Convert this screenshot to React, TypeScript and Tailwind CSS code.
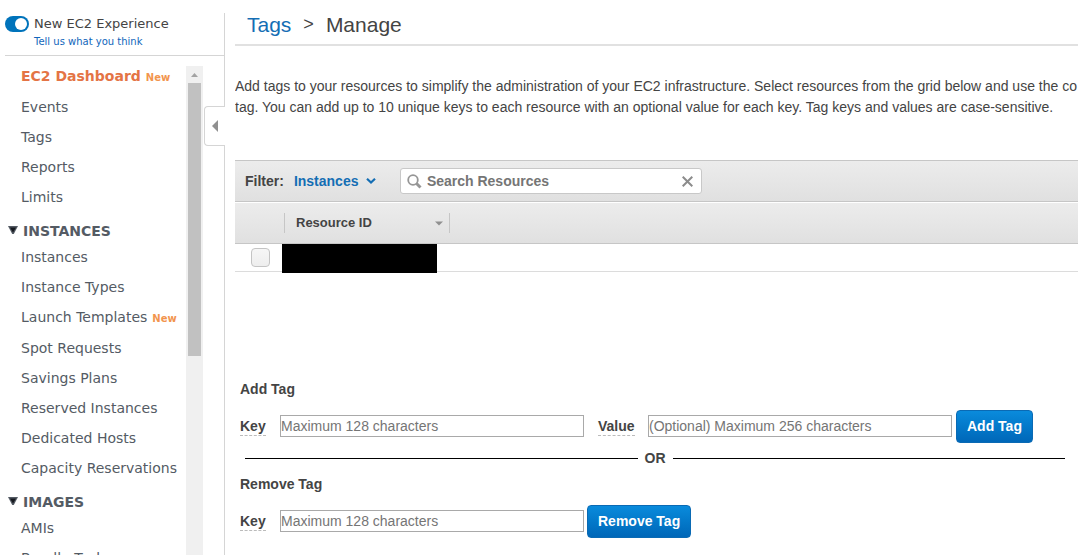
import React from "react";

type NavItem = { label: string; isNew?: boolean };
type NavGroup = { title: string; items: NavItem[] };

const topItems: NavItem[] = [
  { label: "Events" },
  { label: "Tags" },
  { label: "Reports" },
  { label: "Limits" },
];

const groups: NavGroup[] = [
  {
    title: "INSTANCES",
    items: [
      { label: "Instances" },
      { label: "Instance Types" },
      { label: "Launch Templates", isNew: true },
      { label: "Spot Requests" },
      { label: "Savings Plans" },
      { label: "Reserved Instances" },
      { label: "Dedicated Hosts" },
      { label: "Capacity Reservations" },
    ],
  },
  { title: "IMAGES", items: [{ label: "AMIs" }, { label: "Bundle Tasks" }] },
];

function NewBadge() {
  return <span className="ml-[5px] text-[10px] font-bold text-[#f2954e]">New</span>;
}

function NavLink({ label, isNew }: NavItem) {
  return (
    <li className={isNew ? "h-[31px] leading-[30px]" : "h-[30px] leading-[30px]"}>
      <a href="#" className="pl-[21px] text-[14px] text-[#545b64]">
        {label}
      </a>
      {isNew && <NewBadge />}
    </li>
  );
}

function Sidebar() {
  return (
    <aside className="relative mt-[13px] flex w-[225px] shrink-0 flex-col border-r border-[#d5d5d5] font-['DejaVu_Sans',sans-serif]">
      <div className="ml-[5px] flex h-[43px] gap-[5px] border-b border-[#d5d5d5] pt-[2px]">
        <label className="relative mt-px flex h-4 w-6 shrink-0 items-center justify-end rounded-full bg-[#0073bb] pr-[2px]">
          <input
            type="checkbox"
            defaultChecked
            aria-label="New EC2 Experience"
            className="absolute inset-0 appearance-none"
          />
          <span className="h-3 w-3 rounded-full bg-white" />
        </label>
        <div className="whitespace-nowrap">
          <div className="text-[13px] leading-[17px] text-[#444]">New EC2 Experience</div>
          <a href="#" className="block text-[10px] leading-5 text-[#1166bb]">
            Tell us what you think
          </a>
        </div>
      </div>

      <div className="flex min-h-0 flex-1">
        <nav className="w-[186px] shrink-0 overflow-hidden whitespace-nowrap pt-[5px]">
          <ul>
            <li className="h-[31px] leading-[30px]">
              <a href="#" className="pl-[21px] text-[14px] font-bold text-[#e47445]">
                EC2 Dashboard
              </a>
              <NewBadge />
            </li>
            {topItems.map((item) => (
              <NavLink key={item.label} {...item} />
            ))}
          </ul>
          {groups.map((group) => (
            <section key={group.title}>
              <h2 className="flex h-[30px] items-center gap-[5px] pl-2 pt-2 text-[14px] font-bold text-[#545b64]">
                <svg width="10" height="10" viewBox="0 0 10 10" aria-hidden="true">
                  <path d="M0 0H10L5.8 8H4.2Z" fill="#545b64" />
                  <path d="M2 1.5H8L5 6.5Z" fill="#16191f" />
                </svg>
                {group.title}
              </h2>
              <ul>
                {group.items.map((item) => (
                  <NavLink key={item.label} {...item} />
                ))}
              </ul>
            </section>
          ))}
        </nav>
        <div className="mt-[10px] flex w-[17px] flex-col items-center bg-[#f0f0f0]">
          <svg width="17" height="17" viewBox="0 0 17 17" aria-hidden="true">
            <path d="M5 11L8.5 7L12 11Z" fill="#a3a3a3" />
          </svg>
          <div className="h-[273px] w-[13px] bg-[#c1c1c1]" />
        </div>
      </div>

      <button
        type="button"
        aria-label="Collapse sidebar"
        className="absolute -right-px top-[93px] flex h-10 w-[21px] items-center justify-center rounded-l border border-r-0 border-[#d5d5d5] bg-white"
      >
        <svg width="6" height="12" viewBox="0 0 6 12" aria-hidden="true">
          <path d="M6 0V12L0 6Z" fill="#909090" />
        </svg>
      </button>
    </aside>
  );
}

function TagField({ id, label, placeholder }: { id: string; label: string; placeholder: string }) {
  return (
    <>
      <div className={label === "Key" ? "w-10" : "ml-[14px] w-[50px]"}>
        <label htmlFor={id} className="inline-block border-b border-dashed border-[#bbb] font-bold leading-[17px]">
          {label}
        </label>
      </div>
      <input
        id={id}
        type="text"
        placeholder={placeholder}
        className="mb-px h-[22px] w-[304px] border border-[#a9a9a9] bg-white text-[14px] placeholder:text-[#757575]"
      />
    </>
  );
}

function PrimaryButton({ children }: { children: React.ReactNode }) {
  return (
    <button
      type="button"
      className="h-[33px] whitespace-nowrap rounded border border-[#0a6ab4] bg-linear-to-b from-[#0a8bdc] to-[#0067b8] px-[10px] text-[14px] font-bold text-white"
    >
      {children}
    </button>
  );
}

function FilterBar() {
  return (
    <div className="flex h-[42px] items-center border-y border-[#c6c6c6] bg-linear-to-b from-[#ececec] to-[#e0e0e0] pl-[10px] font-bold">
      <label htmlFor="filter">Filter:</label>
      <div className="ml-[10px] flex w-[106px] items-center">
        <select id="filter" className="w-[72px] appearance-none bg-transparent text-[14px] font-bold text-[#146eb4]">
          <option>Instances</option>
        </select>
        <svg width="10" height="6" viewBox="0 0 10 6" aria-hidden="true">
          <path d="M1 0.8L5 4.5L9 0.8" fill="none" stroke="#146eb4" strokeWidth="2.2" />
        </svg>
      </div>
      <div className="flex h-[26px] w-[302px] items-center rounded-[3px] border border-[#c8c8c8] bg-white pl-[6px] pr-2">
        <svg width="15" height="15" viewBox="0 0 15 15" fill="none" aria-hidden="true">
          <circle cx="6" cy="6" r="4.8" stroke="#969696" strokeWidth="1.8" />
          <path d="M9.5 9.5L13.5 13.5" stroke="#969696" strokeWidth="3" />
        </svg>
        <input
          type="text"
          aria-label="Search Resources"
          placeholder="Search Resources"
          className="ml-[5px] min-w-0 flex-1 text-[14px] font-bold placeholder:text-[#757575]"
        />
        <button type="button" aria-label="Clear search">
          <svg width="11" height="11" viewBox="0 0 11 11" aria-hidden="true">
            <path d="M0.7 0.7L10.3 10.3M10.3 0.7L0.7 10.3" stroke="#8c8c8c" strokeWidth="2" />
          </svg>
        </button>
      </div>
    </div>
  );
}

function ResourceTable() {
  return (
    <table className="mt-px w-full table-fixed border-separate border-spacing-0">
      <thead>
        <tr className="h-[41px] bg-linear-to-b from-[#ececec] to-[#e0e0e0]">
          <th className="w-[47px] border-b border-[#c6c6c6] p-0" />
          <th className="w-[168px] border-b border-[#c6c6c6] p-0 text-left">
            <div className="ml-[2px] flex h-5 items-center justify-between border-x border-[#c6c6c6] pl-[11px] pr-[6px] text-[13px] font-bold leading-5">
              Resource ID
              <svg width="8" height="5" viewBox="0 0 8 5" aria-hidden="true">
                <path d="M0 0.5H8L4 4.5Z" fill="#909090" />
              </svg>
            </div>
          </th>
          <th className="border-b border-[#c6c6c6] p-0" />
        </tr>
      </thead>
      <tbody>
        <tr>
          <td className="border-b border-[#dcdcdc] p-0 align-middle">
            <input
              type="checkbox"
              aria-label="Select resource"
              className="ml-4 block h-[19px] w-[19px] appearance-none rounded border border-[#c4c4c4] bg-linear-to-b from-[#f6f6f6] to-[#eeeeee]"
            />
          </td>
          <td className="border-b border-[#dcdcdc] p-0">
            <div className="-mb-[2px] h-[29px] w-[155px] bg-black" />
          </td>
          <td className="border-b border-[#dcdcdc] p-0" />
        </tr>
      </tbody>
    </table>
  );
}

export default function App() {
  return (
    <div className="flex h-screen overflow-hidden bg-white text-[14px] leading-[21px] text-[#444]">
      <Sidebar />
      <main className="min-w-0 flex-1 pl-[10px] font-['Liberation_Sans',Arial,sans-serif]">
        <h1 className="flex h-[46px] items-center gap-3 border-b-2 border-[#e1e1e1] pl-3 pt-[4px] text-[21px]">
          <a href="#" className="text-[#146eb4]">
            Tags
          </a>
          <span className="text-[18px]">&gt;</span>
          <span>Manage</span>
        </h1>
        <p className="mt-[30px] overflow-hidden whitespace-nowrap">
          Add tags to your resources to simplify the administration of your EC2 infrastructure. Select resources from the
          grid below and use the co
          <br />
          tag. You can add up to 10 unique keys to each resource with an optional value for each key. Tag keys and values
          are case-sensitive.
        </p>
        <div className="mt-[42px]">
          <FilterBar />
          <ResourceTable />
        </div>

        <form className="mt-[107px] pl-[5px] pr-[13px]">
          <h2 className="font-bold">Add Tag</h2>
          <div className="mt-[10px] flex items-center">
            <TagField id="add-key" label="Key" placeholder="Maximum 128 characters" />
            <TagField id="add-value" label="Value" placeholder="(Optional) Maximum 256 characters" />
            <div className="ml-1">
              <PrimaryButton>Add Tag</PrimaryButton>
            </div>
          </div>
          <div className="mt-[5px] flex items-center gap-[7px] pl-[5px] font-bold">
            <span className="h-px flex-1 bg-black" />
            OR
            <span className="h-px flex-1 bg-black" />
          </div>
          <h2 className="mt-[5px] font-bold">Remove Tag</h2>
          <div className="mt-[10px] flex items-center">
            <TagField id="remove-key" label="Key" placeholder="Maximum 128 characters" />
            <div className="ml-[3px]">
              <PrimaryButton>Remove Tag</PrimaryButton>
            </div>
          </div>
        </form>
      </main>
    </div>
  );
}
